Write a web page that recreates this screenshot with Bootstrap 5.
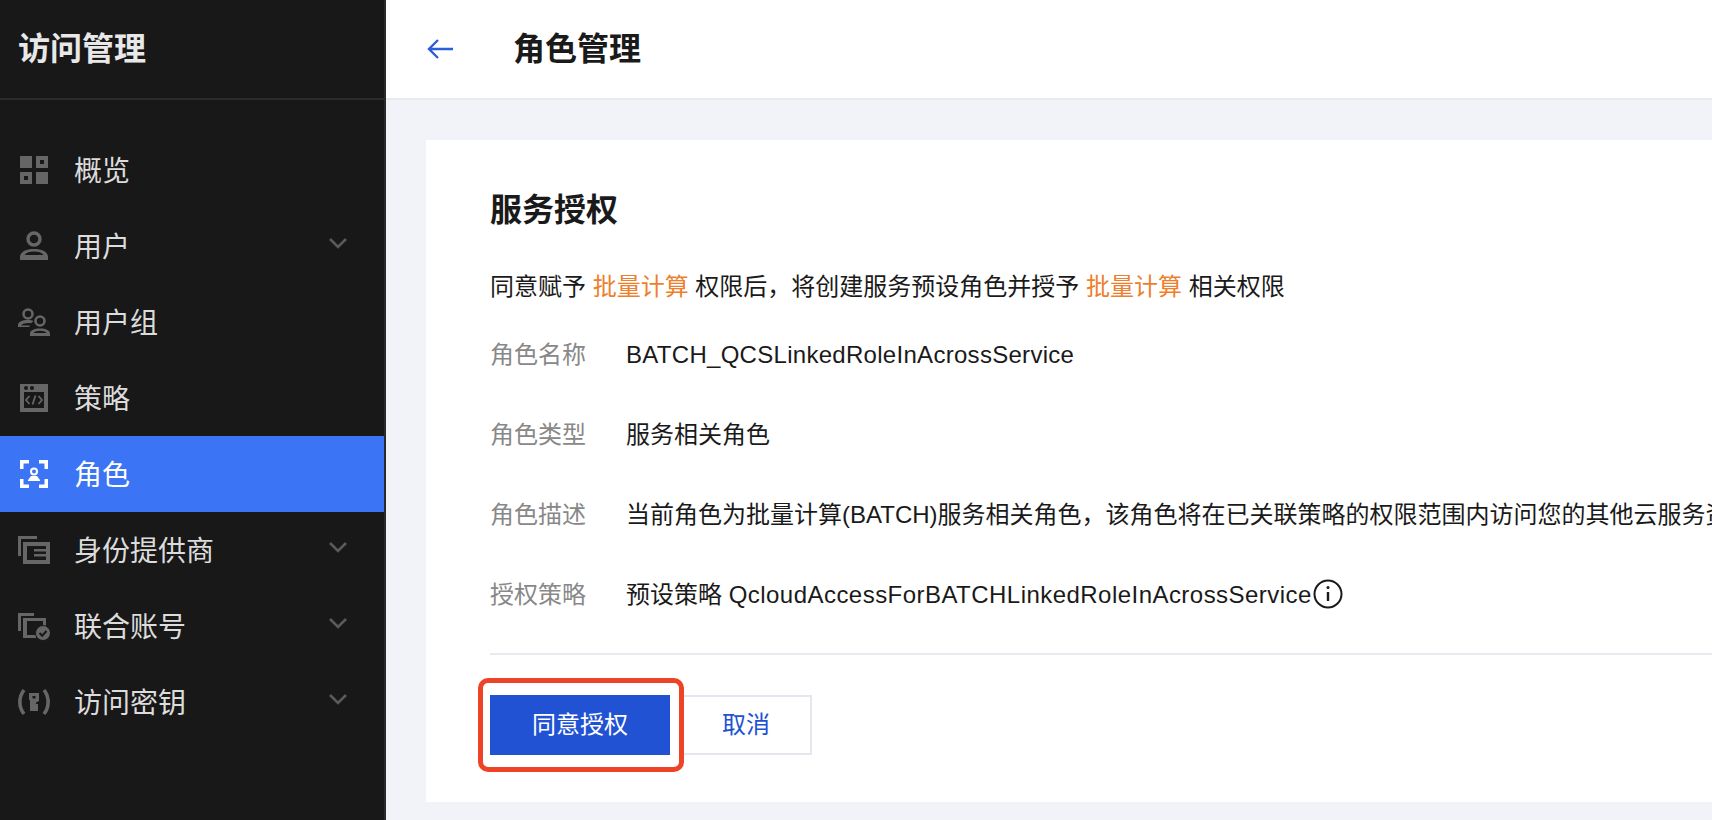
<!DOCTYPE html>
<html lang="zh-CN">
<head>
<meta charset="utf-8">
<title>角色管理</title>
<link href="https://cdn.jsdelivr.net/npm/bootstrap@5.3.0/dist/css/bootstrap.min.css" rel="stylesheet">
<style>
html,body{height:820px;overflow:hidden}
body{font-family:"Liberation Sans","Noto Sans CJK SC",sans-serif;background:#f2f3f8;color:#1a1a1a;font-size:24px}
.shell{height:820px}
.sidebar{width:386px;flex:none;background:#181818;border-right:2px solid #2a2a2a}
.side-title{height:100px;border-bottom:2px solid #2a2a2a;padding-left:18px;font-size:32px;font-weight:700;color:#e8e8e8}
.side-nav{padding-top:32px}
.side-item{height:76px;padding:0 37px 0 18px;color:#dcdcdc;font-size:28px;text-decoration:none}
.side-item:hover{color:#dcdcdc}
.side-item span{padding-top:4px}
.side-item.is-on{background:#3c74f6;color:#fff}
.side-ico{width:32px;height:32px;margin-right:24px;flex:none}
.side-arrow{width:18px;height:12px;margin-top:-6px}
.main-pane{min-width:0}
.topbar{height:100px;background:#fff;border-bottom:2px solid #e9eaf0;padding-left:40px}
.back-ico{width:28px;height:24px;margin-right:59px}
.topbar-title{font-size:32px;font-weight:700;margin:0;color:#1a1a1a}
.auth-panel{margin:40px 0 0 40px;height:662px;background:#fff;padding:48px 0 0 64px;overflow:hidden}
.panel-title{font-size:32px;line-height:44px;font-weight:700;margin:0 0 37px}
.intro-line{line-height:36px;margin-bottom:32px;white-space:nowrap}
.hl{color:#ee7f2d}
.info-row{line-height:36px;margin-bottom:44px;white-space:nowrap}
.info-row.row-end{margin-bottom:0}
.info-label{width:136px;flex:none;color:#888}
.latin-a{letter-spacing:.29px}
.latin-b{letter-spacing:.46px}
.info-ico{width:30px;height:30px;margin:-6px 0 0 1px;vertical-align:middle}
.panel-rule{height:2px;background:#e9eaf0;margin:40px 0;border:0;opacity:1}
.primary-wrap{width:180px;height:60px}
.btn.agree-btn{width:180px;height:60px;background:#2152d4;border:0;border-radius:0;color:#fff;font-size:24px;padding:0}
.btn.cancel-btn{width:132px;height:60px;margin-left:10px;background:#fff;border:2px solid #e6e7ee;border-radius:0;color:#2152d4;font-size:24px;padding:0}
.red-frame{position:absolute;left:-12px;right:-14px;top:-17px;bottom:-17px;border:5px solid #ee4326;border-radius:10px;pointer-events:none}
</style>
</head>
<body>
<div class="shell d-flex">
  <aside class="sidebar d-flex flex-column">
    <div class="side-title d-flex align-items-center">访问管理</div>
    <nav class="side-nav nav flex-column flex-nowrap">
      <a class="side-item d-flex align-items-center" href="#">
        <svg class="side-ico" viewBox="-2 -2 32 32" fill="#666"><path fill-rule="evenodd" d="M0 0h12v12H0zM16 0h12v12H16zM20 4v4h4V4zM0 16h12v12H0zM4 20v4h4v-4zM16 16h12v12H16z"/></svg>
        <span>概览</span>
      </a>
      <a class="side-item d-flex align-items-center" href="#">
        <svg class="side-ico" viewBox="-2 -2 32 32" fill="#666"><circle cx="14" cy="7" r="6" fill="none" stroke="#666" stroke-width="3.4"/><path fill-rule="evenodd" d="M0 28v-3c0-5 6-8 14-8s14 3 14 8v3zM4.500 23h19c-1.500-2.500-5-3.500-9.500-3.500S6 20.500 4.500 23z"/></svg>
        <span>用户</span>
        <svg class="side-arrow ms-auto" viewBox="0 0 18 12" fill="none" stroke="#5a5a5a" stroke-width="2.600"><path d="M1 2l8 8 8-8"/></svg>
      </a>
      <a class="side-item d-flex align-items-center" href="#">
        <svg class="side-ico" viewBox="0 0 32 32" fill="#666"><circle cx="10" cy="8" r="4.500" fill="none" stroke="#666" stroke-width="2.600"/><path d="M0 21v-2c0-3 4-5 10-5 2 0 4 .3 5.500 .9l-2.500 2.300c-1-.2-2-.2-3-.2-3.500 0-6 1-7 2.500h8.500V21z"/><circle cx="22" cy="15" r="4.500" fill="none" stroke="#666" stroke-width="2.600"/><path fill-rule="evenodd" d="M12 30v-2.500c0-3 4-5 10-5s10 2 10 5V30zM15.500 27h13c-1-1.500-3.500-2.300-6.500-2.300s-5.500 .8-6.500 2.300z"/></svg>
        <span>用户组</span>
      </a>
      <a class="side-item d-flex align-items-center" href="#">
        <svg class="side-ico" viewBox="-2 -2 32 32"><rect width="28" height="28" fill="#666"/><rect x="4" y="8" width="20" height="16" fill="#181818"/><circle cx="6" cy="4" r="2" fill="#181818"/><circle cx="12" cy="4" r="2" fill="#181818"/><path d="M9.500 12l-3.500 4 3.500 4M18.500 12l3.500 4-3.500 4M15.500 11.500l-3 9" fill="none" stroke="#666" stroke-width="1.800"/></svg>
        <span>策略</span>
      </a>
      <a class="side-item is-on d-flex align-items-center" href="#">
        <svg class="side-ico" viewBox="-2 -2 32 32" fill="#fff"><path d="M0 0h9v3.500H3.500V9H0zM19 0h9v9h-3.500V3.500H19zM0 19h3.500v5.500H9V28H0zM24.500 19H28v9h-9v-3.500h5.500z"/><circle cx="14" cy="11.500" r="3" fill="none" stroke="#fff" stroke-width="2"/><path d="M11 16h6l3 4v1H8v-1z"/></svg>
        <span>角色</span>
      </a>
      <a class="side-item d-flex align-items-center" href="#">
        <svg class="side-ico" viewBox="0 0 32 32" fill="#666"><path d="M0 2h19v3H3v17H0z"/><path fill-rule="evenodd" d="M5 8h27v22H5zM9 12v14h19v-3.500H16V20h12v-2.500H16V15h12v-3z"/></svg>
        <span>身份提供商</span>
        <svg class="side-arrow ms-auto" viewBox="0 0 18 12" fill="none" stroke="#5a5a5a" stroke-width="2.600"><path d="M1 2l8 8 8-8"/></svg>
      </a>
      <a class="side-item d-flex align-items-center" href="#">
        <svg class="side-ico" viewBox="0 0 32 32" fill="#666"><path d="M0 3h16v3H3v15H0z"/><path d="M5 8h23v9h-3v-6H9v14h9v3H5z"/><circle cx="25" cy="23" r="7.500" stroke="#181818" stroke-width="1"/><path d="M21.500 23l2.700 2.700 4.300-4.700" fill="none" stroke="#181818" stroke-width="2"/></svg>
        <span>联合账号</span>
        <svg class="side-arrow ms-auto" viewBox="0 0 18 12" fill="none" stroke="#5a5a5a" stroke-width="2.600"><path d="M1 2l8 8 8-8"/></svg>
      </a>
      <a class="side-item d-flex align-items-center" href="#">
        <svg class="side-ico" viewBox="0 0 32 32" fill="#666"><path d="M6 4C.5 11 .5 21 6 28M26 4c5.500 7 5.500 17 0 24" fill="none" stroke="#666" stroke-width="3.600"/><path fill-rule="evenodd" d="M11 7h10v8l-3 1.500V18h2v7h-8V14.500l-1-1zM14.500 10v2.500h3V10z"/></svg>
        <span>访问密钥</span>
        <svg class="side-arrow ms-auto" viewBox="0 0 18 12" fill="none" stroke="#5a5a5a" stroke-width="2.600"><path d="M1 2l8 8 8-8"/></svg>
      </a>
    </nav>
  </aside>
  <div class="main-pane flex-grow-1 d-flex flex-column">
    <header class="topbar d-flex align-items-center">
      <svg class="back-ico" viewBox="0 0 28 24" fill="none" stroke="#2b5fd9" stroke-width="2.400"><path d="M27 12H3M12 3l-9 9 9 9"/></svg>
      <h1 class="topbar-title">角色管理</h1>
    </header>
    <section class="auth-panel">
      <h2 class="panel-title">服务授权</h2>
      <div class="intro-line">同意赋予 <span class="hl">批量计算</span> 权限后，将创建服务预设角色并授予 <span class="hl">批量计算</span> 相关权限</div>
      <div class="info-row d-flex"><div class="info-label">角色名称</div><div class="latin-a">BATCH_QCSLinkedRoleInAcrossService</div></div>
      <div class="info-row d-flex"><div class="info-label">角色类型</div><div>服务相关角色</div></div>
      <div class="info-row d-flex"><div class="info-label">角色描述</div><div>当前角色为批量计算(BATCH)服务相关角色，该角色将在已关联策略的权限范围内访问您的其他云服务资源。</div></div>
      <div class="info-row row-end d-flex"><div class="info-label">授权策略</div><div>预设策略 <span class="latin-b">QcloudAccessForBATCHLinkedRoleInAcrossService</span><svg class="info-ico" viewBox="0 0 30 30" fill="none" stroke="#1a1a1a" stroke-width="2"><circle cx="15" cy="15" r="13.500"/><path d="M15 13v9" stroke-width="2.400"/><circle cx="15" cy="8.500" r="1.500" fill="#1a1a1a" stroke="none"/></svg></div></div>
      <hr class="panel-rule">
      <div class="d-flex">
        <div class="primary-wrap position-relative">
          <button type="button" class="btn agree-btn">同意授权</button>
          <div class="red-frame"></div>
        </div>
        <button type="button" class="btn cancel-btn">取消</button>
      </div>
    </section>
  </div>
</div>
<script src="https://cdn.jsdelivr.net/npm/bootstrap@5.3.0/dist/js/bootstrap.bundle.min.js"></script>
</body>
</html>
